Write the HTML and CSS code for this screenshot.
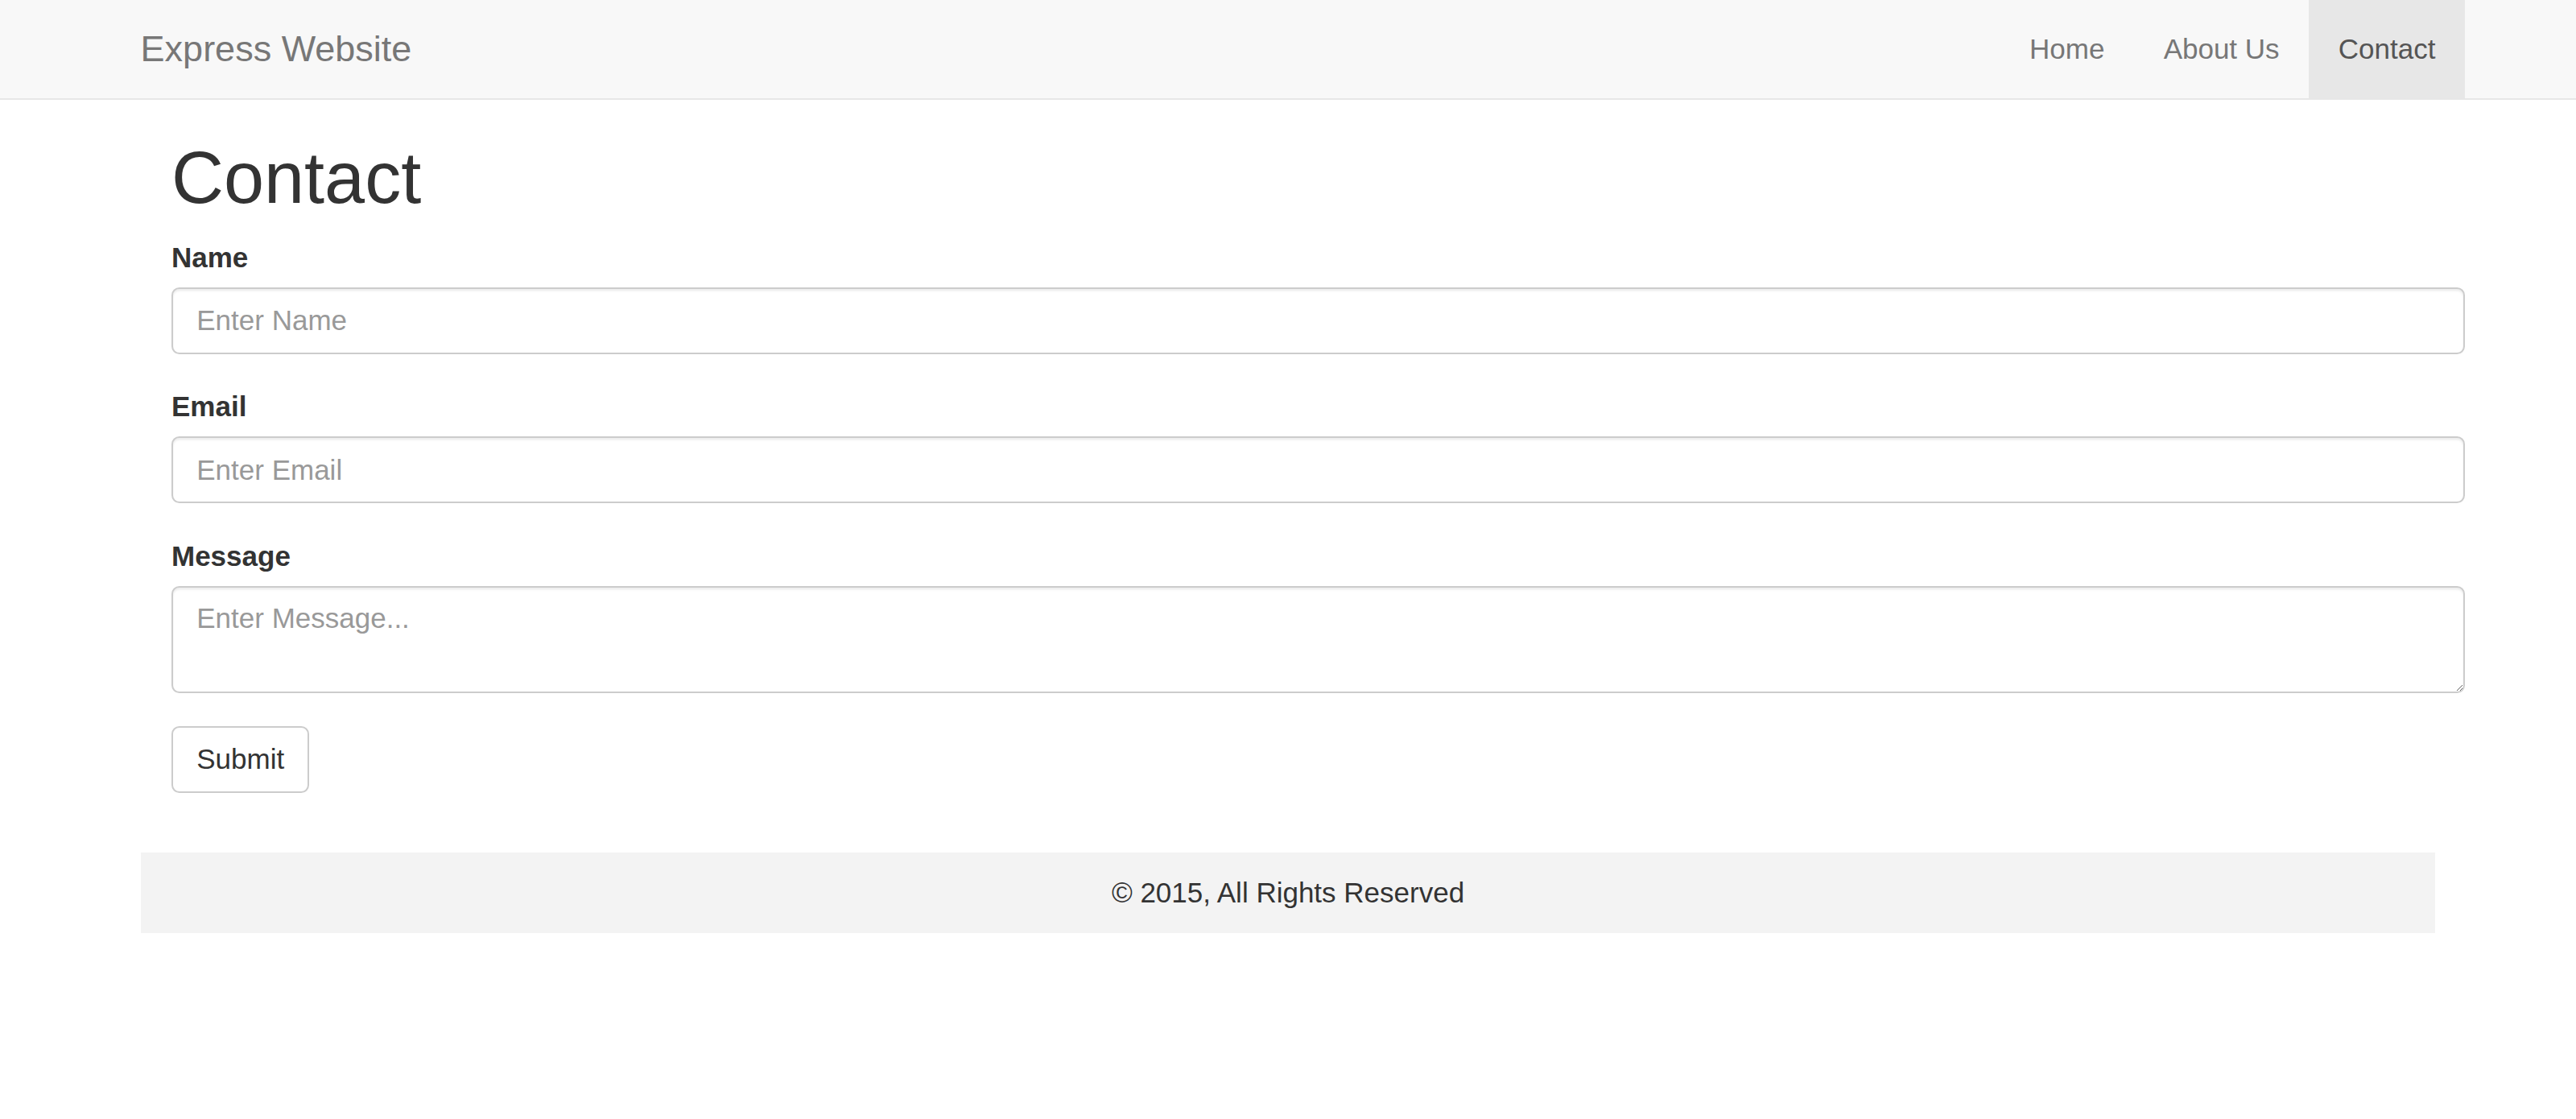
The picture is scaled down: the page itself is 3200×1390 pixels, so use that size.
FILE: index.html
```html
<!DOCTYPE html>
<html lang="en">
<head>
<meta charset="utf-8">
<title>Contact - Express Website</title>
<link rel="stylesheet" href="styles.css">
</head>
<body>
<nav class="navbar">
  <div class="container navbar-inner">
    <a class="brand" href="#">Express Website</a>
    <ul class="nav">
      <li><a href="#">Home</a></li>
      <li><a href="#">About Us</a></li>
      <li class="active"><a href="#">Contact</a></li>
    </ul>
  </div>
</nav>
<main class="main">
  <h1 class="title">Contact</h1>
  <form class="form">
    <div class="form-group">
      <label class="label" for="name">Name</label>
      <input class="control" id="name" type="text" placeholder="Enter Name">
    </div>
    <div class="form-group">
      <label class="label" for="email">Email</label>
      <input class="control" id="email" type="email" placeholder="Enter Email">
    </div>
    <div class="form-group">
      <label class="label" for="message">Message</label>
      <textarea class="control textarea" id="message" rows="2" placeholder="Enter Message..."></textarea>
    </div>
    <button class="btn" type="submit">Submit</button>
  </form>
</main>
<div class="container">
  <footer class="footer">© 2015, All Rights Reserved</footer>
</div>
</body>
</html>
```

FILE: styles.css
```css
* { box-sizing: border-box; }
html, body { margin: 0; padding: 0; }
body {
  background: #fff;
  color: #333;
  font-family: "Liberation Sans", Arial, Helvetica, sans-serif;
  font-size: 35px;
  line-height: 48.8px;
}
.container {
  width: 2924px;
  margin: 0 auto;
  padding: 0 36.6px;
}
.navbar {
  background: #f8f8f8;
  border-bottom: 2.44px solid #e7e7e7;
  min-height: 124.4px;
  margin-bottom: 48.8px;
}
.navbar-inner {
  display: flex;
  justify-content: space-between;
  align-items: stretch;
}
.brand {
  display: block;
  margin-left: -36.6px;
  padding: 36.6px;
  height: 122px;
  font-size: 45px;
  line-height: 48.8px;
  color: #777;
  text-decoration: none;
}
.nav {
  display: flex;
  list-style: none;
  margin: 0 -36.6px 0 0;
  padding: 0;
}
.nav a {
  display: block;
  padding: 36.6px;
  line-height: 48.8px;
  height: 122px;
  color: #777;
  text-decoration: none;
}
.nav .active a {
  background: #e7e7e7;
  color: #555;
}
.main {
  width: 2924px;
  margin: 0 auto;
  padding: 0 0 0 75px;
}
.title {
  margin: 48.8px 0 26px;
  font-size: 90px;
  line-height: 96.6px;
  font-weight: 500;
  color: #333;
}
.form { margin: 0; }
.form-group { margin-bottom: 41.5px; }
.label {
  display: inline-block;
  margin-bottom: 12.2px;
  font-weight: 700;
  color: #333;
}
.control {
  display: block;
  width: 100%;
  height: 83px;
  padding: 14.64px 29.28px;
  font-family: inherit;
  font-size: 35px;
  line-height: 48.8px;
  color: #555;
  background: #fff;
  border: 2.44px solid #ccc;
  border-radius: 9.76px;
  box-shadow: inset 0 2.44px 2.44px rgba(0,0,0,.075);
  outline: none;
}
.control::placeholder { color: #999; opacity: 1; }
.textarea {
  height: 133px;
  resize: vertical;
}
.btn {
  display: inline-block;
  height: 83px;
  padding: 14.64px 29.28px;
  font-family: inherit;
  font-size: 35px;
  line-height: 48.8px;
  color: #333;
  background: #fff;
  border: 2.44px solid #ccc;
  border-radius: 9.76px;
  cursor: pointer;
}
.footer {
  margin-top: 74px;
  height: 100px;
  padding: 25.6px 0;
  background: #f3f3f3;
  text-align: center;
  color: #333;
}
```
